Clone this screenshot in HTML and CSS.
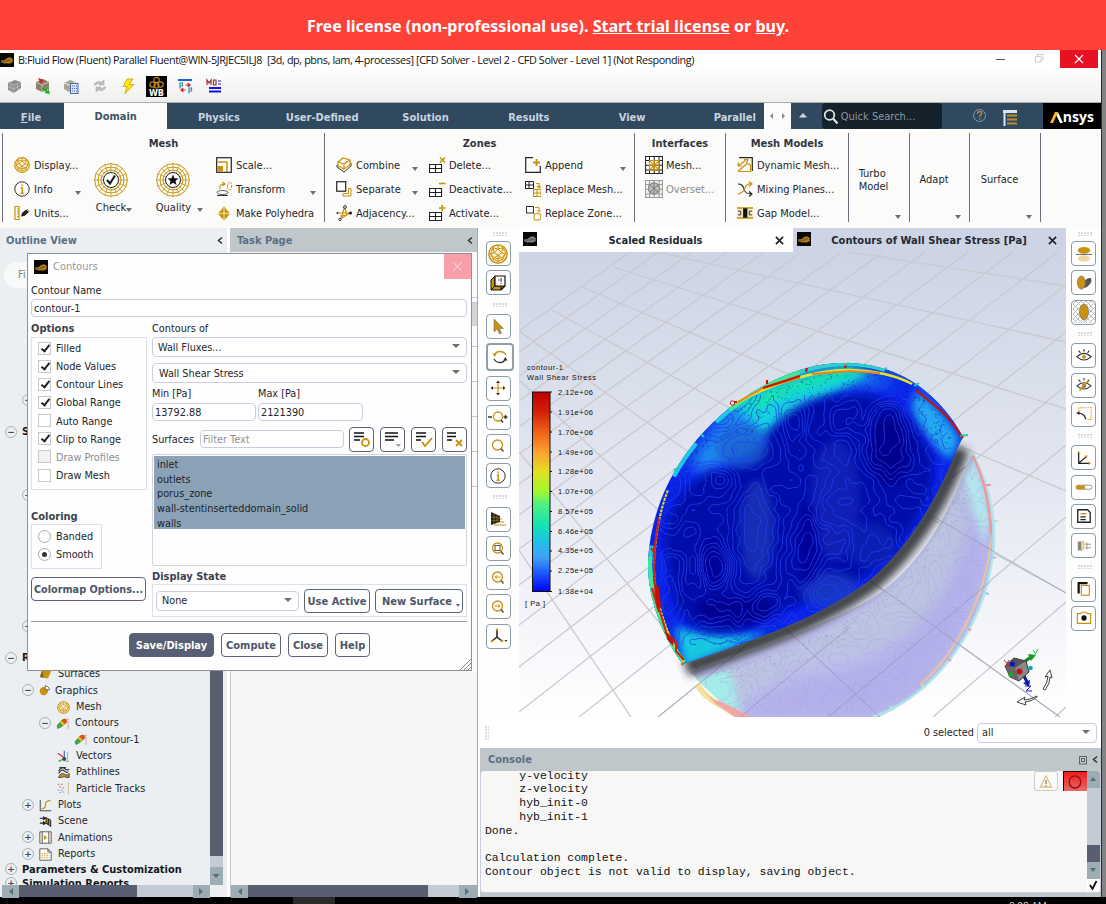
FILE: index.html
```html
<!DOCTYPE html>
<html lang="en">
<head>
<meta charset="utf-8">
<title>Fluent</title>
<link rel="stylesheet" href="styles.css">
</head>
<body>
<svg class="defs" width="0" height="0">
  <symbol id="logo" viewBox="0 0 14 14"><rect width="14" height="14" fill="#0a0805"/><path d="M1 8Q4 9 6 6Q9 3 12 5L13 9Q10 12 6 10Q3 11 1 9Z" fill="#8a5f10"/><path d="M1 8Q5 8 7 6T13 7M4 10Q8 10 12 8" stroke="#d9a030" fill="none" stroke-width=".7"/></symbol>
  <symbol id="sphere" viewBox="0 0 16 16"><circle cx="8" cy="8" r="7.3" fill="#faf0d4" stroke="#c9920e" stroke-width="1.2"/><path d="M4 3L8 4L12 3L14 7L12 12L8 14L4 12L2 8L4 3M8 1V4L5 7L8 9L11 7L8 4M5 7L2 8L5 11L8 9L8 14M5 11L4 13M11 7L14 8L11 11L8 9M11 11L12 13M5 11L8 12L11 11M4 3L5 7M12 3L11 7" fill="none" stroke="#c9920e" stroke-width=".8"/></symbol>
  <symbol id="info" viewBox="0 0 16 16"><circle cx="8" cy="8" r="7.2" fill="#fff" stroke="#333" stroke-width="1"/><path d="M8 3.5V5.3M6.8 7H8.3V12M6.5 12.2H9.8" stroke="#c9920e" stroke-width="1.5" fill="none"/></symbol>
  <symbol id="units" viewBox="0 0 16 16"><path d="M1 1.500H5V14.500H1ZM3 4H5M3 6.500H5M3 9H5M3 11.500H5" fill="none" stroke="#c9920e" stroke-width="1.2"/><path d="M7 11.500L8 8L12 4.500L15 7L10.500 11Z" fill="#222"/><path d="M13 4l2.500 2.500" stroke="#888"/></symbol>
  <symbol id="web" viewBox="0 0 34 34"><g fill="none" stroke="#c9920e" stroke-width="1"><circle cx="17" cy="17" r="16.300"/><circle cx="17" cy="17" r="13"/><circle cx="17" cy="17" r="10"/><path d="M17 0V34M0 17H34M5 5L29 29M29 5L5 29M10.500 1.500L23.500 32.500M23.500 1.500L10.500 32.500M1.500 10.500L32.500 23.500M1.500 23.500L32.500 10.500" stroke-width=".7"/></g><circle cx="17" cy="17" r="7.500" fill="#fff" stroke="#222"/></symbol>
  <symbol id="scale" viewBox="0 0 16 16"><rect x=".7" y=".7" width="14.600" height="14.600" fill="#fff" stroke="#222" stroke-width="1.2"/><path d="M1.500 5H11V15" fill="none" stroke="#c9920e" stroke-width="1.500"/><rect x="1.500" y="9" width="5.500" height="5.500" fill="#c9920e"/></symbol>
  <symbol id="transform" viewBox="0 0 16 16"><path d="M4 8Q3 3 8 3M6.500 1L9 3L6.500 5" fill="none" stroke="#c9920e" stroke-width="1.2"/><ellipse cx="13.500" cy="5" rx="2" ry="4" fill="none" stroke="#c9920e" stroke-dasharray="2 1"/><ellipse cx="6.500" cy="11.500" rx="5.500" ry="2" fill="#fff" stroke="#555"/><path d="M1 14.500H12" stroke="#333"/></symbol>
  <symbol id="poly" viewBox="0 0 16 16"><path d="M8 1L14 9L8 15.500L2 9Z" fill="#c9920e"/><path d="M8 1V15M2 9Q8 7 14 9" fill="none" stroke="#fff1c0" stroke-width=".9"/></symbol>
  <symbol id="combine" viewBox="0 0 16 16"><path d="M1 10L8 15L15 9V6L8 11L1 8Z" fill="#fff" stroke="#333"/><path d="M2 5L7 1L14 3V8L8 12L2 9ZM2 5L8 7L14 3M8 7V12" fill="#fffaf0" stroke="#c9920e" stroke-width="1.2"/></symbol>
  <symbol id="separate" viewBox="0 0 16 16"><rect x=".7" y=".7" width="9" height="9.500" fill="#fff" stroke="#222" stroke-width="1.2"/><path d="M12.500 7.500H15V15H7V12.500H12.500Z" fill="none" stroke="#c9920e"/></symbol>
  <symbol id="adj" viewBox="0 0 16 16"><path d="M8.500 2L5 14M15 8H2M8.500 2L11 10M4 14L14 8M4 11L11 10" fill="none" stroke="#c9920e" stroke-width="1.200"/><circle cx="9" cy="2" r="1.400" fill="#fff" stroke="#333"/><circle cx="14.500" cy="8" r="1.500" fill="#111"/><circle cx="1.500" cy="8" r="1.100" fill="#333"/><circle cx="4" cy="14.500" r="1.200" fill="#fff" stroke="#333"/></symbol>
  <symbol id="cells" viewBox="0 0 16 16"><path d="M.5 7.500H12.500V15.500H.5ZM.5 11.500H12.500M6.500 7.500V15.500" fill="#fff" stroke="#222" stroke-width="1.1"/></symbol>
  <symbol id="append" viewBox="0 0 16 16"><path d="M8 .7H.7V15.300H15.300V9" fill="none" stroke="#222" stroke-width="1.2"/><path d="M11.500 2V9M8 5.500H15" stroke="#c9920e" stroke-width="1.800"/></symbol>
  <symbol id="repmesh" viewBox="0 0 16 16"><path d="M0 .5H8.500V7.500H0M0 4H8.500M4 .5V7.500M.5 .5V7.500" fill="none" stroke="#222"/><path d="M8.500 8.500H16V15.500H8.500ZM8.500 12H16M12 8.500V15.500M11 2.500H14V6M12 5L14 7L16 5" fill="none" stroke="#c9920e" stroke-width="1.100"/></symbol>
  <symbol id="repzone" viewBox="0 0 16 16"><rect x="1.500" y="1.500" width="7" height="6.500" fill="#fff" stroke="#333"/><rect x="9" y="8.500" width="6.500" height="6.500" rx="2" fill="#fff" stroke="#d6ab48" stroke-width="1.400"/><path d="M10 2.500H14V6M12.500 5L14 7L15.500 5" fill="none" stroke="#c9920e"/></symbol>
  <symbol id="imesh" viewBox="0 0 16 16"><path d="M.5 .5H15.500V15.500H.5ZM4 .5V15.500M12.500 .5V15.500M8.200 .5V15.500M.5 4H15.500M.5 8.200H15.500M.5 12.500H15.500" fill="#fff" stroke="#222" stroke-width=".9"/><path d="M4 4h8.500v8.500h-8.500zM4.500 4.500l7.500 7.500M12 4.500l-7.500 7.500M8.200 4v8.500M4 8.200h8.500" fill="none" stroke="#c9920e" stroke-width="1"/></symbol>
  <symbol id="overset" viewBox="0 0 16 16"><path d="M.5 .5H15.500V15.500H.5ZM4 .5V15.500M12.500 .5V15.500M8.200 .5V15.500M.5 4H15.500M.5 8.200H15.500M.5 12.500H15.500" fill="#f4f4f4" stroke="#999" stroke-width=".9"/><circle cx="8" cy="7.500" r="5" fill="#bbb" stroke="#888"/><path d="M4 4l8 7M12 4l-8 7M8 2v11" stroke="#777" stroke-width=".8"/></symbol>
  <symbol id="dyn" viewBox="0 0 16 16"><path d="M2 .7H15.300V14" fill="none" stroke="#222" stroke-width="1.200"/><path d="M1 9L9 3M7 2.500L11 2.500L9.500 6M1 9L1.500 5.500M1 9H5M1 14.500L10 6.500L13.500 8V14.500H1" fill="none" stroke="#c9920e" stroke-width="1.200"/></symbol>
  <symbol id="mix" viewBox="0 0 16 16"><path d="M1 3Q6 3 7 8T14 13M12 10.500L15 13L12 15.500" fill="none" stroke="#222" stroke-width="1.100"/><path d="M1 13Q6 12 8 7T14 3M12 .5L15 3L12 5.500" fill="none" stroke="#c9920e" stroke-width="1.200"/></symbol>
  <symbol id="gap" viewBox="0 0 17 12"><rect width="17" height="12" fill="#f2e6c4"/><path d="M0 .7H17M0 11.300H17" stroke="#c9920e" stroke-width="1.400"/><rect x="6.500" y="1" width="4.500" height="10" fill="#111"/><path d="M1 4H4V8H1M16 4H13V8H16" fill="none" stroke="#333"/></symbol>
  <symbol id="lens" viewBox="0 0 16 16"><circle cx="7.500" cy="7" r="5" fill="#fff" stroke="#c9920e" stroke-width="1.300"/><path d="M11 10.500L13.500 13.500" stroke="#555" stroke-width="1.500"/></symbol>
  <symbol id="contour" viewBox="0 0 16 16"><path d="M1.500 14Q0 11 2 9L8 3Q11 1 13 3Q14 6 12 8L6 13Q3 15 1.500 14Z" fill="#4aa04a"/><path d="M6 5L8 3Q11 1 13 3Q14 6 12 8L10.500 9Z" fill="#e0501c"/><path d="M4.500 6.500L6.500 4.500L11 8.500L9 10.500Z" fill="#d8c820"/><path d="M14.800 2V15" stroke="#c65" stroke-dasharray="2 1"/></symbol>
</svg>

<div class="banner"><span>Free license (non-professional use). <a>Start trial license</a> or <a>buy</a>.</span></div>

<div class="desktop">
<div class="app">
  <header class="titlebar">
    <svg class="title-logo"><use href="#logo"/></svg>
    <span class="title-text">B:Fluid Flow (Fluent) Parallel Fluent@WIN-5JRJEC5ILJ8 &nbsp;[3d, dp, pbns, lam, 4-processes] [CFD Solver - Level 2 - CFD Solver - Level 1] (Not Responding)</span>
    <svg class="win-icons" width="60" height="20" viewBox="0 0 60 20"><path d="M2 9.500h9" stroke="#555"/><path d="M41.500 6.500h5.500v5.500h-5.500zM43.500 6.500v-2h5.500v5.500h-2" fill="none" stroke="#ccc"/></svg>
    <svg class="win-close" viewBox="0 0 38 18"><path d="M15 5l8 8M23 5l-8 8" stroke="#fff" stroke-width="1.100"/></svg>
  </header>

  <div class="quickbar">
    <svg viewBox="0 0 20 20"><path d="M4 7L11 4L17 6V12L10 17L4 14Z" fill="#8c8c8c"/><path d="M4 7L10 9L17 6M10 9V17M7 8V15.500M13.500 7.500V14.500M4 10.500L10 13L17 9" stroke="#bdbdbd" stroke-width=".8" fill="none"/></svg>
    <svg viewBox="0 0 20 20"><path d="M3 6L10 3L16 6V13L9 16L3 13Z" fill="#8a8168"/><path d="M3 6L9 9L16 6M9 9V16" stroke="#c9c2a8" fill="none"/><path d="M5 2l6 2-3 4z" fill="#c22"/><path d="M10 11l5 4V12l2 6-6-1 2-1-4-3z" fill="#2a2"/></svg>
    <svg viewBox="0 0 20 20"><path d="M3 7L9 4L15 6V13L8 16L3 13Z" fill="#aaa791"/><path d="M3 7L8 9L15 6" stroke="#eee" fill="none"/><rect x="9.500" y="7.500" width="7.500" height="10" fill="#dbe5f8" stroke="#4a69ae"/><path d="M11 10h5M11 12.500h5M11 15h5" stroke="#4a69ae" stroke-dasharray="1 1"/></svg>
    <svg viewBox="0 0 20 20"><path d="M4 9Q6 4 12 6L14 4V9H9L11 7.500Q7 7 6 9ZM16 11Q14 16 8 14L6 16V11H11L9 12.500Q13 13 14 11Z" fill="#c4c4c4" stroke="#999" stroke-width=".5"/></svg>
    <svg viewBox="0 0 20 20"><path d="M9 3L5 10.500H9L7 17.500L16 8.500H11L15 3Z" fill="#ffe800" stroke="#b89800" stroke-width=".7"/></svg>
    <span class="wb"><svg viewBox="0 0 21 13"><g fill="none" stroke="#c28a1c" stroke-width="1.200"><circle cx="10.500" cy="4" r="2.700"/><circle cx="6.500" cy="8.500" r="2.700"/><circle cx="14.500" cy="8.500" r="2.700"/><circle cx="10.500" cy="9.500" r="2.500"/></g></svg><b>WB</b></span>
    <svg viewBox="0 0 20 20"><path d="M3 4h14" stroke="#1768c4" stroke-width="2"/><path d="M5 12.500V7h2.500v3h-2.500M14 17.500v-5.500h2.500v3h-2.500" fill="none" stroke="#2a8fc0" stroke-width="1.200"/><path d="M10 9h5M13 7l2.500 2-2.500 2zM11 14H6M8 12l-2.500 2 2.500 2z" fill="#d22" stroke="#d22" stroke-width=".8"/></svg>
    <svg viewBox="0 0 20 20"><path d="M3 9V4l2 3 2-3v5M9.500 4h2.500v5H9.500z" fill="none" stroke="#9b3030" stroke-width="1.200"/><path d="M14 5h3M14 8h3" stroke="#22c"/><path d="M5 12h12M5 15.500h12" stroke="#11e" stroke-width="2"/></svg>
  </div>

  <nav class="tabs">
    <span class="tab tab-file"><u>F</u>ile</span><span class="tab tab-active">Domain</span><span class="tab">Physics</span><span class="tab">User-Defined</span><span class="tab">Solution</span><span class="tab">Results</span><span class="tab">View</span><span class="tab tab-last">Parallel</span>
    <span class="tab-scroll"><svg width="27" height="26"><path d="M9 10v6l-3-3zM18 10v6l3-3z" fill="#888"/></svg></span>
    <span class="tab-up"><svg width="31" height="26"><path d="M8 14.500h8l-4-4.500z" fill="#cdd8e2"/></svg></span>
    <span class="search"><svg width="18" height="18" viewBox="0 0 18 18"><circle cx="7.500" cy="7" r="4.800" fill="none" stroke="#dce3e8" stroke-width="1.800"/><path d="M11 10.500l4.500 5" stroke="#dce3e8" stroke-width="2.200"/></svg>Quick Search...</span>
    <svg class="tab-tools" width="101" height="26"><circle cx="37.500" cy="12.500" r="6" fill="none" stroke="#8296a8"/><path d="M35.500 11q0-2.500 2.200-2.500t2 2.200q-.2 1-2 2.300v1M37.700 15v1.500" fill="none" stroke="#b98c30" stroke-width="1.300"/><path d="M61 8.500h14" stroke="#dde4ec" stroke-width="3"/><path d="M62.500 10v13" stroke="#dde4ec" stroke-width="2"/><path d="M65 12.500h10M65 16.500h10M65 20.500h10" stroke="#b98c30" stroke-width="2.200"/></svg>
    <span class="ansys"><svg width="14" height="13" viewBox="0 0 14 13"><path d="M0 12L5 1H8L3 12Z" fill="#ffb71b"/><path d="M6.500 4.500L8 1L13 12H10Z" fill="#fff"/></svg><b>nsys</b></span>
  </nav>

  <section class="ribbon">
    <div class="group g-mesh">
      <h3>Mesh</h3>
      <div class="cols">
        <div class="col"><p><svg><use href="#sphere"/></svg>Display...</p><p><svg><use href="#info"/></svg>Info<i class="caret"></i></p><p><svg><use href="#units"/></svg>Units...</p></div>
        <div class="big"><svg viewBox="0 0 34 34"><use href="#web"/><path d="M13 17l3 3.500 5-8" fill="none" stroke="#111" stroke-width="2"/></svg><span>Check<i class="caret"></i></span></div>
        <div class="big big-q"><svg viewBox="0 0 34 34"><use href="#web"/><path d="M17 11.500l1.500 3.800 4 .2-3 2.600 1 4-3.500-2.300-3.500 2.300 1-4-3-2.600 4-.2z" fill="#111"/></svg><span>Quality<i class="caret caret-far"></i></span></div>
        <div class="col"><p><svg><use href="#scale"/></svg>Scale...</p><p><svg><use href="#transform"/></svg>Transform<i class="caret"></i></p><p><svg><use href="#poly"/></svg>Make Polyhedra</p></div>
      </div>
    </div>
    <div class="group g-zones">
      <h3>Zones</h3>
      <div class="cols">
        <div class="col col-combine"><p><svg><use href="#combine"/></svg>Combine<i class="caret"></i></p><p><svg><use href="#separate"/></svg>Separate<i class="caret"></i></p><p><svg><use href="#adj"/></svg>Adjacency...</p></div>
        <div class="col"><p><svg viewBox="0 0 16 16"><use href="#cells"/><path d="M11 .5l5 5M16 .5l-5 5" stroke="#c9920e" stroke-width="1.600"/></svg>Delete...</p><p><svg viewBox="0 0 16 16"><use href="#cells"/><path d="M10 2.500h6.500" stroke="#c9920e" stroke-width="1.600"/></svg>Deactivate...</p><p><svg viewBox="0 0 16 16"><use href="#cells"/><path d="M10 3h6.500M13.200 0v6.500" stroke="#c9920e" stroke-width="1.600"/></svg>Activate...</p></div>
        <div class="col"><p><svg><use href="#append"/></svg>Append<i class="caret"></i></p><p><svg><use href="#repmesh"/></svg>Replace Mesh...</p><p><svg><use href="#repzone"/></svg>Replace Zone...</p></div>
      </div>
    </div>
    <div class="group g-int">
      <h3>Interfaces</h3>
      <div class="cols"><div class="col"><p><svg class="i18"><use href="#imesh"/></svg>Mesh...</p><p class="dim"><svg class="i18"><use href="#overset"/></svg>Overset...</p></div></div>
    </div>
    <div class="group g-models">
      <h3>Mesh Models</h3>
      <div class="cols"><div class="col"><p><svg><use href="#dyn"/></svg>Dynamic Mesh...</p><p><svg><use href="#mix"/></svg>Mixing Planes...</p><p><svg><use href="#gap"/></svg>Gap Model...</p></div></div>
    </div>
    <div class="group solo g-turbo"><span>Turbo<br>Model</span><i class="caret"></i></div>
    <div class="group solo g-adapt"><span>Adapt</span><i class="caret"></i></div>
    <div class="group solo g-surface"><span>Surface</span><i class="caret"></i></div>
  </section>

  <main class="workspace">
    <aside class="outline">
      <div class="panel-head">Outline View<svg width="8" height="10"><path d="M6 1.500L2.500 4.500L6 7.500" fill="none" stroke="#333" stroke-width="1.500"/></svg></div>
      <div class="outline-body">
        <div class="tree">
          <div class="tree-filter">Fi</div>
          <div class="row hid-1"><i class="knob">−</i></div>
          <div class="row hid-2 top"><i class="knob">−</i><b>S</b></div>
          <div class="row hid-3"><i class="knob">+</i></div>
          <div class="row hid-4"><i class="knob">−</i></div>
          <div class="row hid-5 top"><i class="knob">−</i><b>R</b></div>
          <div class="row lv1"><svg class="leaf" viewBox="0 0 16 16"><path d="M4 2L15 4L11 13L1 11Z" fill="#c9920e"/><path d="M4 2L1 11L6 12Z" fill="#8a6610"/></svg>Surfaces</div>
          <div class="row lv1"><i class="knob">−</i><svg class="narrow" viewBox="0 0 16 16"><circle cx="7" cy="9" r="6" fill="#c9920e"/><path d="M9 7V1Q15 2 15 7Z" fill="#fff" stroke="#333"/></svg>Graphics</div>
          <div class="row lv2"><svg class="leaf"><use href="#sphere"/></svg>Mesh</div>
          <div class="row lv2"><i class="knob">−</i><svg><use href="#contour"/></svg>Contours</div>
          <div class="row lv3"><svg class="leaf"><use href="#contour"/></svg>contour-1</div>
          <div class="row lv2"><svg class="leaf" viewBox="0 0 16 16"><path d="M1 4l7 5" stroke="#d33" stroke-width="1.500"/><path d="M9 1v8" stroke="#37c" stroke-width="1.500"/><path d="M2 14l6-3" stroke="#3a3" stroke-width="1.500"/><circle cx="9" cy="11" r="2.500" fill="#445"/><path d="M13 3v10M11 14h4" stroke="#777" stroke-dasharray="2 1"/></svg>Vectors</div>
          <div class="row lv2"><svg class="leaf" viewBox="0 0 16 16"><path d="M2 14Q5 7 9 10T15 9V14H11Q9 12 6 14Z" fill="#c9920e" stroke="#333"/><path d="M2 6Q6 0 9 3T15 4M2 9Q6 3 9 6T14 7M3 2h8" fill="none" stroke="#333" stroke-width="1.500"/></svg>Pathlines</div>
          <div class="row lv2"><svg class="leaf" viewBox="0 0 16 16"><path d="M1 3h8M3 6l8 2" stroke="#d77" stroke-dasharray="2 2" stroke-width="1.400"/><path d="M1 10h7M3 13l8-1" stroke="#99d" stroke-dasharray="2 2" stroke-width="1.400"/><path d="M14 1v14" stroke="#c86" stroke-dasharray="2 1"/></svg>Particle Tracks</div>
          <div class="row lv1"><i class="knob">+</i><svg viewBox="0 0 16 16"><path d="M1.500 1V14.500H15" fill="none" stroke="#444" stroke-width="1.200"/><path d="M3 12Q8 12 8 7T14 2" fill="none" stroke="#c9920e" stroke-width="1.400"/></svg>Plots</div>
          <div class="row lv1"><svg class="leaf" viewBox="0 0 16 16"><path d="M1 4h6M1 10h6M5 2l3 2-3 2M5 8l3 2-3 2" stroke="#222" fill="#222" stroke-width="1.300"/><path d="M8 2L15 6V15L8 10Z" fill="#222"/><path d="M10 4v6M13 6v7" stroke="#c9920e" stroke-width="1.600"/></svg>Scene</div>
          <div class="row lv1"><i class="knob">+</i><svg viewBox="0 0 16 16"><path d="M1 1H15V15H1ZM4 1V15M12 1V15" fill="#fff" stroke="#444"/><path d="M6 5l4 3-4 3z" fill="#c9920e"/><path d="M2.500 2v12M13.500 2v12" stroke="#c9920e" stroke-dasharray="1.500 1.500"/></svg>Animations</div>
          <div class="row lv1"><i class="knob">+</i><svg viewBox="0 0 16 16"><path d="M1 1H11L15 5V15H1ZM11 1V5H15" fill="#fff" stroke="#444"/><path d="M3 7h10M3 9.500h10M3 12h10" stroke="#c9920e" stroke-dasharray="2 1"/></svg>Reports</div>
          <div class="row top bold"><i class="knob">+</i><b>Parameters &amp; Customization</b></div>
          <div class="row top last"><i class="knob">+</i><b>Simulation Reports</b></div>
        </div>
        <div class="vscroll"><span class="thumb"></span><span class="track"></span><svg class="sbtn" width="13" height="18"><path d="M2.500 7h7l-3.500 4z" fill="#5c6c75"/></svg></div>
      </div>
      <div class="hscroll hs-outline"><svg class="sbtn" width="17" height="13"><path d="M11 3v7l-4-3.500z" fill="#5c6c75"/></svg><span class="thumb"></span><span class="track"></span><svg class="sbtn" width="17" height="13"><path d="M6 3v7l4-3.500z" fill="#5c6c75"/></svg></div>
    </aside>

    <aside class="task">
      <div class="panel-head">Task Page<svg width="8" height="10"><path d="M6 1.500L2.500 4.500L6 7.500" fill="none" stroke="#333" stroke-width="1.500"/></svg></div>
      <div class="task-body"><div class="peek"><i></i><i class="mo"></i><i></i><i></i><i></i><i></i><i></i></div></div>
      <div class="hscroll hs-task"><svg class="sbtn" width="17" height="13"><path d="M11 3v7l-4-3.500z" fill="#5c6c75"/></svg><span class="thumb"></span><span class="track"></span><svg class="sbtn" width="18" height="13"><path d="M6 3v7l4-3.500z" fill="#5c6c75"/></svg></div>
    </aside>

    <section class="right">
      <div class="view-row">
        <div class="tools tools-left">
          <i class="grip"></i>
          <span class="tool"><svg class="t20"><use href="#sphere"/></svg></span>
          <span class="tool"><svg viewBox="0 0 16 16"><path d="M1 5L5 1V11L1 15Z" fill="#c9920e" stroke="#111"/><path d="M1 15H11L15 11H5Z" fill="#c9920e" stroke="#111"/><path d="M5 1H15V11H5ZM11 15V12M11 15L15 11" fill="#fff" stroke="#111" stroke-width="1.200"/><path d="M8 5h5M11 3v6" stroke="#333" stroke-dasharray="1.500 1"/></svg></span>
          <i class="grip"></i>
          <span class="tool"><svg viewBox="0 0 16 16"><path d="M4 0V13L7 10L9.500 15L11.500 14L9.500 9.500H13.500Z" fill="#c9920e" stroke="#777" stroke-width=".6"/></svg></span>
          <span class="tool tool-on"><svg viewBox="0 0 16 16"><path d="M2.500 6Q4 2.500 8 2.500T14 6" fill="none" stroke="#c9920e" stroke-width="1.300"/><path d="M.5 4.500l4.500 0L2.500 8z" fill="#c9920e"/><path d="M2 10Q4 13.500 8 13.500T13.500 10" fill="none" stroke="#333" stroke-width="1.300"/><path d="M15.500 11.500l-4.500 0L13.500 8z" fill="#333"/></svg></span>
          <span class="tool"><svg viewBox="0 0 16 16"><path d="M8 2V14M2 8H14" stroke="#c9920e" stroke-width="1.200"/><path d="M8 .5l2 2.500H6zM8 15.500l2-2.500H6zM.5 8L3 6v4zM15.500 8L13 6v4z" fill="#333"/></svg></span>
          <span class="tool"><svg class="t20" viewBox="0 0 20 16"><circle cx="10" cy="7.500" r="4.500" fill="#fff" stroke="#c9920e" stroke-width="1.300"/><path d="M13 11l2 2.500M0 8h4M15.500 8h4M17.500 6v4" stroke="#333" stroke-width="1.400"/></svg></span>
          <span class="tool"><svg><use href="#lens"/></svg></span>
          <span class="tool"><svg><use href="#info"/></svg></span>
          <i class="grip"></i>
          <span class="tool"><svg viewBox="0 0 16 16"><path d="M1 1L10 5V11L1 14Z" fill="#222"/><path d="M4 2v11M7 3v9M1 6l9 1M1 10l9-1" stroke="#c9920e" stroke-width=".5"/><path d="M10 8H12M10 11H14M4 14H16" stroke="#c9920e" stroke-width="1.200"/></svg></span>
          <span class="tool"><svg viewBox="0 0 16 16"><use href="#lens"/><rect x="5" y="4.500" width="5" height="5" fill="#fff" stroke="#555"/></svg></span>
          <span class="tool"><svg viewBox="0 0 16 16"><use href="#lens"/><path d="M5 7h5.500M7 5.500L5 7l2 1.500" fill="none" stroke="#c9920e"/></svg></span>
          <span class="tool"><svg viewBox="0 0 16 16"><use href="#lens"/><path d="M4.500 7H10M8 5.500L10 7L8 8.500" fill="none" stroke="#c9920e"/></svg></span>
          <span class="tool"><svg viewBox="0 0 16 16"><path d="M7 2V9L2 13M7 9L12 13" fill="none" stroke="#222" stroke-width="1.500"/><circle cx="7" cy="1.800" r="1.300" fill="#c9920e"/><circle cx="2" cy="13" r="1.300" fill="#c9920e"/><circle cx="12" cy="13" r="1.300" fill="#c9920e"/><path d="M14.500 12h3l-1.500 2z" fill="#333"/></svg></span>
        </div>
        <div class="viewer">
          <div class="view-tabs">
            <div class="vtab"><svg class="vt-logo"><use href="#logo" style="filter:grayscale(1)"/></svg><b>Scaled Residuals</b><svg class="vt-x" viewBox="0 0 10 10"><path d="M1 1l8 8M9 1l-8 8" stroke="#222" stroke-width="1.800"/></svg></div>
            <div class="vtab vtab-on"><svg class="vt-logo"><use href="#logo"/></svg><b>Contours of Wall Shear Stress [Pa]</b><svg class="vt-x" viewBox="0 0 10 10"><path d="M1 1l8 8M9 1l-8 8" stroke="#222" stroke-width="1.800"/></svg></div>
          </div>
          <svg class="scene" viewBox="519 252 547 465" width="547" height="465">
            <defs>
              <linearGradient id="sky" x1="0" y1="0" x2="0" y2="1"><stop offset="0" stop-color="#cdd4e4"/><stop offset=".5" stop-color="#e4e7f2"/><stop offset="1" stop-color="#fff"/></linearGradient>
              <linearGradient id="jet" x1="0" y1="0" x2="0" y2="1"><stop offset="0" stop-color="#c00000"/><stop offset=".1" stop-color="#d42008"/><stop offset=".2" stop-color="#f06018"/><stop offset=".3" stop-color="#ffa030"/><stop offset=".4" stop-color="#e0e020"/><stop offset=".5" stop-color="#a0f830"/><stop offset=".56" stop-color="#50f080"/><stop offset=".68" stop-color="#10e0b8"/><stop offset=".75" stop-color="#20c0e8"/><stop offset=".83" stop-color="#40a0f8"/><stop offset=".9" stop-color="#2060f8"/><stop offset="1" stop-color="#0000ff"/></linearGradient>
              <clipPath id="dome"><path id="dome-path" d="M683 664C668 645 648 605 648 565C650 480 710 400 800 370C836 358 884 360 919 386C938 400 953 418 963 437L957 449C935 505 905 550 870 580C820 618 755 640 683 664Z"/></clipPath>
              <clipPath id="lowclip"><path d="M695 678Q790 655 860 613T972 453C985 475 994 505 994 540C990 615 945 690 873 720H740Z"/></clipPath>
              <filter id="b2" x="-20%" y="-20%" width="140%" height="140%"><feGaussianBlur stdDeviation="1.500"/></filter>
              <filter id="b5" x="-30%" y="-30%" width="160%" height="160%"><feGaussianBlur stdDeviation="4"/></filter>
              <filter id="b9" x="-30%" y="-30%" width="160%" height="160%"><feGaussianBlur stdDeviation="8"/></filter>
            </defs>
            <rect x="519" y="252" width="547" height="465" fill="url(#sky)"/>
            <g id="floor" stroke="#c9c9ce" stroke-width="1.300" fill="none">
              <path d="M850 252L1066 286M657 252L1066 342M613 267L1066 409M582 287L1066 491M552 310L1066 593M519 331L1060 717M519 380L880 717M519 452L737 717M519 550L631 717"/>
              <path d="M933 717L1066 602M828 717L1066 517M740 717L1066 445M658 717L1066 386M579 717L1066 332M519 712L1066 285M519 667L1058 252M519 625L1013 252M519 585L968 252M519 549L925 252M519 515L883 252M519 484L842 252M519 454L802 252M519 427L764 252M519 401L727 252M519 376L692 252M519 352L658 252M519 331L630 252M1055 717L1066 707"/>
            </g>
            <path d="M690 672Q790 640 860 605T972 453C985 475 994 505 994 540C990 615 945 690 873 717H737Z" fill="#b6b8e8" opacity=".88"/>
            <g clip-path="url(#lowclip)">
              <path d="M690 676Q760 660 800 650L900 560L960 470L985 510L930 640L800 660L720 720Z" fill="#bcc4e2" filter="url(#b9)"/>
              <path d="M735 720Q760 680 830 672Q930 650 965 540Q975 510 960 490Q990 500 988 560Q950 700 870 720Z" fill="#b0acea" opacity=".8" filter="url(#b9)"/>
              <path d="M690 680L730 666L740 716H712Z" fill="#a4ecea" filter="url(#b5)"/>
              <path d="M972 455L990 515L984 545L965 480Z" fill="#b2eaee" filter="url(#b5)"/>
              <path id="ghost-lines" fill="none" stroke="#a3a3e0" stroke-width=".5" opacity=".7"/>
              <path id="ghost-specks" fill="none" stroke="#8a8aae" stroke-width=".6" opacity=".5"/>
            </g>
            <path d="M972 453C985 475 994 505 994 540C990 615 945 690 873 717" fill="none" stroke="#a9e6ea" stroke-width="3" opacity=".8"/>
            <path d="M973 456C984 478 990 505 991 535" fill="none" stroke="#ef9a9a" stroke-width="2.500"/>
            <path d="M991 540C987 590 960 650 920 685" fill="none" stroke="#ecc3a0" stroke-width="2"/>
            <path d="M697 684Q704 697 722 706L740 717" fill="none" stroke="#f1e39f" stroke-width="6"/>
            <path d="M704 692L714 700L722 702L752 717H735L716 704Z" fill="#f3a7a5"/>
            <path d="M984 485l7 0M968 629l3 1M947 658l4 3" stroke="#ee9b9b" stroke-width="2"/>
            <path d="M993 521l5 0M921 684l4 4M890 706l4 4" stroke="#b5e8c8" stroke-width="2"/>
            <path d="M990 557l6 1M985 593l4 1" stroke="#a5c8f0" stroke-width="2"/>
            <path d="M785 628L880 717M870 580L1060 717M927 513L1066 593M658 717L753 640M828 717L990 582M740 717L850 627M940 486L965 467" stroke="#9292b4" stroke-width="1" opacity=".65"/>
            <path d="M686 668C757 643 821 621 872 583C909 551 939 508 961 448" fill="none" stroke="#2c2e30" stroke-width="17" opacity=".9" filter="url(#b5)"/>
            <use href="#dome-path" fill="#0a24ea"/>
            <g clip-path="url(#dome)">
              <path d="M730 402Q790 360 850 362L900 385Q820 380 790 418Q760 460 735 455Q700 490 690 460Z" fill="#1d8cf0" filter="url(#b9)"/>
              <path d="M735 405Q790 370 870 372Q830 394 800 408Q785 430 760 432Z" fill="#12cfe0" filter="url(#b5)"/>
              <path d="M735 408Q790 375 850 368L865 375Q800 384 760 408Z" fill="#18e4b0" filter="url(#b5)"/>
              <path d="M915 390Q945 410 960 440L950 460Q925 440 912 410Z" fill="#20a8f0" filter="url(#b5)"/>
              <path d="M675 626Q700 638 770 633L684 668Z" fill="#18c8e0" filter="url(#b5)"/>
              <path d="M664 540Q668 495 712 470Q750 470 770 430Q800 395 850 395Q900 392 915 430Q945 460 925 505Q895 560 850 585Q780 610 740 630Q690 640 674 600Z" fill="#0408a8" filter="url(#b5)"/>
              <g filter="url(#b5)" opacity=".75"><ellipse cx="757" cy="530" rx="17" ry="50" fill="#1c3ab8"/><ellipse cx="835" cy="500" rx="25" ry="60" fill="#1428b8"/><ellipse cx="830" cy="590" rx="30" ry="18" fill="#1d40c4"/><ellipse cx="742" cy="446" rx="26" ry="22" fill="#1a60d0"/><ellipse cx="870" cy="545" rx="25" ry="22" fill="#1028b4"/></g>
              <g filter="url(#b5)"><ellipse cx="890" cy="450" rx="22" ry="36" fill="#00008c"/><ellipse cx="712" cy="562" rx="10" ry="26" fill="#000096"/><ellipse cx="735" cy="610" rx="38" ry="15" fill="#00008f"/><ellipse cx="808" cy="545" rx="10" ry="40" fill="#000098"/></g>
              <path id="lines" fill="none" stroke="#2440f0" stroke-width=".8"/>
              <path id="specks" fill="none" stroke="#0a1e68" stroke-width=".8" opacity=".7"/>
            </g>
            <g fill="none">
              <g clip-path="url(#dome)">
                <path pathLength="100" d="M684 662C670 645 650 605 650 565C652 480 711 402 800 372" stroke="#1cc8e0" stroke-width="4.500" stroke-dasharray="34 20 11 8 27 0"/>
                <path pathLength="100" d="M684 662C670 645 650 605 650 565C652 480 711 402 800 372" stroke="#40e890" stroke-width="4" stroke-dasharray="31 47 22 0"/>
                <path d="M800 372C830 362 860 362 885 370" stroke="#30d0c8" stroke-width="4"/>
                <path d="M885 369Q905 375 919 386Q945 405 963 437" stroke="#1848f0" stroke-width="5"/>
              </g>
              <path d="M735 403Q800 370 850 370Q888 371 912 384" stroke="#e8e428" stroke-width="2.500"/>
              <path d="M738 402L765 387L800 376M760 389L800 378M812 374L850 371L880 373" stroke="#f08018" stroke-width="1.800"/>
              <path d="M763 388L800 376M734 402l3 0M767 384l0-4M806 372l1-4M845 368l1-4M916 390L940 410Q953 422 961 436" stroke="#c81404" stroke-width="2.200"/>
              <path d="M684 662C672 646 654 605 654 565Q656 520 668 490" stroke="#e8d820" stroke-width="2" stroke-dasharray="3 1"/>
              <path d="M659 518L655 545L654 570L656 598L666 632M652 588L659 612M651 548l5 7M665 632L676 642L676 651L684 660" stroke="#d42008" stroke-width="2"/>
              <path d="M655 585l2 24 4-2-2-20zM666 632l8 8-1 6-6-7z" fill="#c81000"/>
              <path d="M845 365l4-2M885 369l2-1M914 386l5-3M960 436l8-1M701 434l3 3M674 469l4 2" stroke="#20c8b0" stroke-width="2"/>
              <circle cx="732.500" cy="403" r="2.200" stroke="#c02010"/><circle cx="682.500" cy="664" r="1.500" fill="#c87010"/><circle cx="962" cy="437" r="1.500" fill="#c02010"/>
            </g>
            <g class="legend">
              <text x="527" y="369.500" textLength="36">contour-1</text><text x="527" y="380" textLength="69">Wall Shear Stress</text>
              <rect x="532.500" y="392" width="17.500" height="199.500" fill="url(#jet)" stroke="#111"/>
              <path d="M550 392h2M550 412h2M550 432h2M550 452h2M550 471.500h2M550 491.500h2M550 511.500h2M550 531.500h2M550 551h2M550 571h2M550 591.500h2" stroke="#111"/>
              <text x="558" y="395" textLength="35">2.12e+06</text><text x="558" y="414.500" textLength="35">1.91e+06</text><text x="558" y="434.500" textLength="35">1.70e+06</text><text x="558" y="454.500" textLength="35">1.49e+06</text><text x="558" y="474" textLength="35">1.28e+06</text><text x="558" y="494" textLength="35">1.07e+06</text><text x="558" y="513.500" textLength="35">8.57e+05</text><text x="558" y="533.500" textLength="35">6.46e+05</text><text x="558" y="553" textLength="35">4.35e+05</text><text x="558" y="573" textLength="35">2.25e+05</text><text x="558" y="593.500" textLength="35">1.38e+04</text>
              <text x="525" y="605.500" textLength="20">[ Pa ]</text>
            </g>
            <g>
              <path d="M1022 672L1028 684" stroke="#1018a0" stroke-width="3"/><path d="M1023 683l7-3-1 7z" fill="#1018a0"/>
              <path d="M1024 662L1031 657" stroke="#108820" stroke-width="3"/><path d="M1028 654l8 1-5 6z" fill="#10a020"/>
              <path d="M1005 666L1014 658L1026 661L1029 672L1019 681L1010 677Z" fill="#8a8a8a" stroke="#333"/><path d="M1005 666L1014 658L1026 661L1015 668Z" fill="#555"/><path d="M1005 666L1015 668L1019 681L1010 677Z" fill="#666"/>
              <circle cx="1019.500" cy="671.500" r="3" fill="#c80c0c"/><circle cx="1012.500" cy="664" r="2.500" fill="#1010c8"/><circle cx="1010.500" cy="674.500" r="2.200" fill="#10b010"/><circle cx="1030.500" cy="668" r="2.300" fill="#10a8b8"/>
              <path d="M1004 660l5 6M1009 660l-4 7" stroke="#d02828"/><path d="M1033 650l2.500 3.500M1038 649l-4 7" stroke="#18c828"/><path d="M1025 686h6l-5 5h6" fill="none" stroke="#2020d8"/>
              <path d="M1043 689Q1048 682 1048 676L1045 677L1050 670L1052 678L1050 677Q1050 684 1045 690ZM1037 696Q1030 700 1024 700L1025 697L1017 702L1026 705L1025 702Q1031 702 1037 697Z" fill="#fff" stroke="#444"/>
            </g>
          </svg>
        </div>
        <div class="tools tools-right">
          <i class="grip"></i>
          <span class="tool"><svg viewBox="0 0 18 18"><ellipse cx="9" cy="5" rx="7" ry="3.800" fill="#c9920e"/><path d="M0 9.500H18" stroke="#555"/><ellipse cx="9" cy="14" rx="7" ry="3.500" fill="#ecd5a0"/></svg></span>
          <span class="tool"><svg viewBox="0 0 18 18"><ellipse cx="12" cy="9" rx="3.500" ry="7" fill="#555" transform="rotate(45 12 9)"/><ellipse cx="6" cy="8.500" rx="4.500" ry="7.500" fill="#c9920e" stroke="#777" stroke-width=".7"/></svg></span>
          <span class="tool"><svg class="t22" viewBox="0 0 22 22"><path d="M0 3l3-3M0 8l8-8M0 13L13 0M0 18L18 0M1 22L22 1M6 22L22 6M11 22L22 11M16 22l6-6M0 18l4 4M0 13l9 9M0 8l14 14M0 3l19 19M3 0l19 19M8 0l14 14M13 0l9 9M18 0l4 4" stroke="#bbb"/><ellipse cx="11" cy="11" rx="4.500" ry="8" fill="#c9920e" stroke="#777" stroke-width=".7"/></svg></span>
          <i class="grip"></i>
          <span class="tool"><svg viewBox="0 0 18 18"><path d="M1 10Q9 2 17 10Q9 17 1 10Z" fill="#fff" stroke="#333" stroke-width="1.300"/><circle cx="9" cy="10" r="2.200" fill="#c9920e"/><path d="M9 1v3M3 3l2 2.500M15 3l-2 2.500" stroke="#333" stroke-width="1.300"/></svg></span>
          <span class="tool"><svg viewBox="0 0 18 18"><path d="M1 10Q9 3 17 10Q9 17 1 10ZM9 1v3M3 3l2 2.500M15 3l-2 2.500" fill="#fff" stroke="#333" stroke-width="1.200"/><circle cx="9" cy="10" r="2.200" fill="#555"/><path d="M4 15L14 4" stroke="#c9920e" stroke-width="2"/></svg></span>
          <span class="tool"><svg viewBox="0 0 18 18"><path d="M3 6V2H17V15H13" fill="none" stroke="#c9920e" stroke-width="1.300" stroke-dasharray="1.500 1.300"/><path d="M2 8Q10 8 11 15" fill="none" stroke="#333" stroke-width="1.600"/><path d="M0 8l4-2v4z" fill="#333"/></svg></span>
          <i class="grip"></i>
          <span class="tool"><svg viewBox="0 0 18 18"><path d="M3 3V15H15M3 15L11 8" fill="none" stroke="#222" stroke-width="1.400"/><path d="M3 1l2 3H1zM17 15l-3-2v4zM13 6l-3.500.5 2.500 3z" fill="#c9920e"/></svg></span>
          <span class="tool"><svg viewBox="0 0 18 18"><rect x="0" y="7" width="18" height="4.500" rx="2.200" fill="#fff" stroke="#888"/><rect x=".5" y="7" width="9.500" height="4.500" fill="#c9920e"/></svg></span>
          <span class="tool"><svg viewBox="0 0 18 18"><path d="M2 2H13L16 5V16H2Z" fill="#fff" stroke="#222" stroke-width="1.500"/><path d="M5 6.500h7" stroke="#c9920e" stroke-width="1.500"/><path d="M5 10h6M5 13h6" stroke="#222" stroke-width="1.300"/></svg></span>
          <span class="tool"><svg viewBox="0 0 18 18"><rect x="2" y="4" width="4" height="10" fill="#888"/><path d="M6 4h3v8l-3 2z" fill="#f4e0b4" stroke="#c9a040" stroke-width=".7"/><path d="M11 7h6M11 11h6M13 5l-2 2 2 2M13 9l-2 2 2 2" fill="none" stroke="#888"/></svg></span>
          <i class="grip"></i>
          <span class="tool"><svg viewBox="0 0 18 18"><path d="M3 14V2.500H13" fill="none" stroke="#111" stroke-width="2.500"/><rect x="6" y="5" width="9" height="11" fill="#fff" stroke="#c9920e" stroke-width="1.300"/></svg></span>
          <span class="tool"><svg viewBox="0 0 18 18"><path d="M1.500 4H5L6.500 2.500H11.500L13 4H16.500V15H1.500Z" fill="#fff" stroke="#c9920e" stroke-width="1.300"/><circle cx="9" cy="9" r="3" fill="#111"/></svg></span>
        </div>
      </div>
      <div class="select-row"><i class="vgrip"></i><span>0 selected</span><span class="combo combo-all">all<i class="caret"></i></span></div>
      <div class="console">
        <div class="panel-head">Console<svg width="22" height="12"><rect x="1.500" y="2.500" width="7" height="7.500" fill="none" stroke="#666"/><rect x="3.500" y="4.500" width="3" height="3" fill="none" stroke="#666"/><path d="M19 2.500L15.500 5.500L19 8.500" fill="none" stroke="#333" stroke-width="1.500"/></svg></div>
        <div class="console-body">
<pre>     y-velocity
     z-velocity
     hyb_init-0
     hyb_init-1
Done.

Calculation complete.
Contour object is not valid to display, saving object.</pre>
          <span class="warn"><svg viewBox="0 0 22 20"><path d="M11 4L16.500 15H5.500Z" fill="none" stroke="#dcc47c" stroke-width="1.300"/><path d="M11 8v4M11 13v1.300" stroke="#666"/></svg></span>
          <span class="stop"><svg viewBox="0 0 22 20"><ellipse cx="10.500" cy="9.500" rx="5.500" ry="5.800" fill="none" stroke="#8c1010" stroke-width="1.300"/></svg></span>
          <div class="cscroll"><svg class="sbtn" width="13" height="17"><path d="M3 10h6l-3-4z" fill="#5c6c75"/></svg><span class="track"></span><span class="thumb"></span><svg class="sbtn" width="13" height="17"><path d="M3 6h6l-3 4z" fill="#5c6c75"/></svg><svg class="ck" width="13" height="13"><path d="M3 6l2.500 4 4-8" fill="none" stroke="#111" stroke-width="1.800"/></svg></div>
        </div>
      </div>
    </section>
  </main>
</div>
<div class="edge"></div>
</div>
<footer class="taskbar"><span class="task-chip"></span><span class="clock">8:08 AM</span></footer>

<section class="dialog">
  <header class="dlg-head"><svg><use href="#logo"/></svg><span>Contours</span><svg class="dlg-x" viewBox="0 0 27 25"><path d="M9.500 8.500l8 8M17.500 8.500l-8 8" stroke="#fbdfe2"/></svg></header>
  <div class="dlg-body">
    <label class="lbl">Contour Name</label>
    <div class="input input-name">contour-1</div>
    <div class="dlg-cols">
      <div class="dlg-left">
        <b class="lbl">Options</b>
        <div class="box opts">
          <p><i class="cb on"></i>Filled</p><p><i class="cb on"></i>Node Values</p><p><i class="cb on"></i>Contour Lines</p><p><i class="cb on"></i>Global Range</p><p><i class="cb"></i>Auto Range</p><p><i class="cb on"></i>Clip to Range</p><p class="dim"><i class="cb off"></i>Draw Profiles</p><p><i class="cb"></i>Draw Mesh</p>
        </div>
        <b class="lbl lbl-color">Coloring</b>
        <div class="box coloring"><p><i class="rb"></i>Banded</p><p><i class="rb on"></i>Smooth</p></div>
        <span class="btn btn-cmap">Colormap Options...</span>
      </div>
      <div class="dlg-right">
        <label class="lbl">Contours of</label>
        <div class="combo c1">Wall Fluxes...<i class="caret"></i></div>
        <div class="combo c2">Wall Shear Stress<i class="caret"></i></div>
        <div class="minmax"><div><label class="lbl">Min [Pa]</label><div class="input">13792.88</div></div><div><label class="lbl">Max [Pa]</label><div class="input">2121390</div></div></div>
        <div class="surf">
          <label>Surfaces</label><div class="input ph">Filter Text</div>
          <span class="sq"><svg viewBox="0 0 18 18"><path d="M1 3h10M1 6.500h10M1 10h6" stroke="#111" stroke-width="1.500"/><circle cx="12.500" cy="12.500" r="3.500" fill="none" stroke="#c9920e" stroke-width="1.800"/></svg></span>
          <span class="sq"><svg viewBox="0 0 18 18"><path d="M1 3h13M1 6.500h13M1 10h9" stroke="#111" stroke-width="1.500"/><path d="M12 14h5l-2.500 3z" fill="#99a"/></svg></span>
          <span class="sq"><svg viewBox="0 0 18 18"><path d="M1 3h10M1 6.500h10M1 10h5" stroke="#111" stroke-width="1.500"/><path d="M7 12l3 4 7-8" fill="none" stroke="#c9920e" stroke-width="1.800"/></svg></span>
          <span class="sq"><svg viewBox="0 0 18 18"><path d="M1 3h9M1 6.500h9M1 10h5" stroke="#111" stroke-width="1.500"/><path d="M10 10l6 6M16 10l-6 6" stroke="#c9920e" stroke-width="1.800"/></svg></span>
        </div>
        <ul class="list"><li>inlet</li><li>outlets</li><li>porus_zone</li><li>wall-stentinserteddomain_solid</li><li>walls</li></ul>
        <b class="lbl">Display State</b>
        <div class="box state"><div class="combo">None<i class="caret"></i></div><span class="btn">Use Active</span><span class="btn btn-ns">New Surface<i class="caret"></i></span></div>
      </div>
    </div>
    <div class="dlg-foot"><span class="btn primary">Save/Display</span><span class="btn b-comp">Compute</span><span class="btn b-close">Close</span><span class="btn b-help">Help</span></div>
  </div>
  <svg class="grab" width="11" height="11"><path d="M0 11L11 0M4 11L11 4M8 11L11 8" stroke="#888"/></svg>
</section>
<script src="script.js"></script>
</body>
</html>
```

FILE: styles.css
```css
* { box-sizing: border-box; }
body { margin: 0; width: 1106px; height: 904px; overflow: hidden; background: #000; color: #24262b; font: 11px/14px "DejaVu Sans Condensed", "DejaVu Sans", sans-serif; font-stretch: condensed; position: relative; }
p, h3, ul, pre { margin: 0; padding: 0; }
i { font-style: normal; }
svg { display: block; flex: none; }
.defs { position: absolute; }

.banner { height: 50px; background: #ff4238; color: #fff; display: flex; align-items: center; justify-content: center; padding: 2px 10px 0 0; font: bold 16px/22px "Noto Sans", sans-serif; font-stretch: normal; white-space: nowrap; }
.banner span { letter-spacing: .04px; }
.banner a { text-decoration: underline; }

.desktop { display: flex; height: 847px; }
.app { width: 1101px; display: flex; flex-direction: column; background: #fefefe; }
.edge { width: 5px; background: #838383; border-left: 1px solid #2a2a2a; }

.titlebar { height: 20px; display: flex; align-items: center; background: #fff; white-space: nowrap; }
.title-logo { width: 14px; height: 14px; }
.title-text { margin-left: 4px; width: 690px; font: 10.800px/16px "Open Sans", sans-serif; font-stretch: normal; letter-spacing: -.385px; color: #111; }
.win-icons { margin-left: 286px; }
.win-close { width: 38px; height: 18px; margin: 0 0 2px 6px; background: #e81123; }

.quickbar { height: 33px; display: flex; align-items: center; gap: 8.500px; padding-left: 4px; background: linear-gradient(#fdfdfd, #efefee); border-bottom: 1px solid #a9adb0; }
.quickbar > svg { width: 20px; height: 20px; }
.wb { width: 21px; height: 21px; background: #000; color: #fff; overflow: hidden; margin: 0 -.5px; }
.wb svg { width: 21px; height: 13px; }
.wb b { display: block; font-size: 9px; line-height: 9px; text-align: center; }

.tabs { height: 26px; display: flex; background: #30495f; color: #c9d4df; font-weight: bold; }
.tab { width: 103.300px; text-align: center; line-height: 29px; flex: none; }
.tab-file { width: 62px; margin-right: 2px; }
.tab-active { background: #fbfbf9; color: #3f5369; line-height: 28px; }
.tab-last { width: 80px; padding-left: 22px; }
.tab-scroll { width: 27px; background: #fbfbf9; }
.tab-up { width: 31px; }
.search { width: 120px; background: #15222c; border-radius: 4px; display: flex; align-items: center; gap: 1px; color: #8d979f; font-weight: normal; font-size: 11px; padding-top: 2px; }
.ansys { width: 58px; background: #000; color: #fff; display: flex; align-items: center; padding: 2px 0 0 7px; }
.ansys b { font: bold 14px/20px "Open Sans", sans-serif; margin-left: -1px; }

.ribbon { height: 99px; background: #fbfbf9; display: flex; padding: 4px 0 6px 2px; }
.group { border-right: 1px solid #6b6e7a; height: 89px; flex: none; }
.group h3 { font-size: 11px; line-height: 14px; text-align: center; margin: 4px 0 2px; color: #30363f; }
.g-mesh { width: 323px; border-left: 1px solid #6b6e7a; }
.g-zones { width: 310px; }
.g-int { width: 91px; }
.g-models { width: 123px; }
.cols { display: grid; }
.g-mesh .cols { grid-template-columns: 67px 60px 64px 110px; padding-left: 11px; }
.g-mesh .col:first-child .caret { margin-right: 0; }
.g-zones .cols { grid-template-columns: 93px 96px 102px; padding-left: 11px; }
.g-int .cols { padding-left: 10px; }
.g-models .cols { padding-left: 11px; }
.col p { height: 24px; display: flex; align-items: center; gap: 4px; white-space: nowrap; padding-top: 1px; }
.col svg { width: 16px; height: 16px; overflow: visible; margin-top: -1px; }
.col svg.i18 { width: 18px; height: 18px; margin-right: -1px; }
.caret { width: 0; height: 0; border: 3.500px solid transparent; border-top: 4px solid #697077; border-bottom: 0; flex: none; }
.col .caret { margin: 7px 1px 0 auto; }
.g-zones .col-combine .caret { margin-right: 11px; }
.g-mesh .col:last-child { margin-left: 11px; }
.g-mesh .col:last-child .caret { margin-right: -1px; }
.big { display: flex; flex-direction: column; align-items: center; padding: 10px 0 0 0; }
.big svg { width: 34px; height: 34px; }
.big-q svg { margin-left: 0; }
.big > span { margin-top: 4px; display: flex; align-items: center; padding-left: 6px; }
.big-q > span { padding-left: 13px; }
.big .caret { margin-top: 4px; }
.big .caret-far { margin-left: 6px; }
.dim { color: #8b8d92; }
.solo { display: flex; flex-direction: column; align-items: center; justify-content: center; position: relative; line-height: 13.500px; padding: 5px 11px 0 0; }
.solo .caret { position: absolute; right: 8px; bottom: 3px; }
.g-turbo { width: 61px; } .g-adapt { width: 60px; } .g-surface { width: 71px; }

.workspace { flex: 1; display: grid; grid-template-columns: 227px 3px 248px 2px 621px; min-height: 0; }
.workspace > * { grid-row: 1; min-height: 0; }
.outline { grid-column: 1; background: #ebeff1; display: flex; flex-direction: column; }
.task { grid-column: 3; background: #f6f6f6; border-right: 1px solid #a5abb0; border-left: 1px solid #c9c9c9; display: flex; flex-direction: column; }
.right { grid-column: 5; display: flex; flex-direction: column; }
.panel-head { height: 24px; background: #bfc7cb; color: #5b6f86; font-weight: bold; font-size: 11px; display: flex; align-items: center; justify-content: space-between; padding: 1px 3px 0 6px; flex: none; }
.outline .panel-head { background: #ebeff1; }
.outline-body { flex: 1; display: flex; min-height: 0; }
.tree { width: 210px; height: 633px; overflow: hidden; white-space: nowrap; }
.tree-filter { margin: 10px 0 0 4px; height: 26px; line-height: 25px; width: 200px; border-radius: 13px; background: #f8faf9; padding-left: 14px; color: #85898d; }
.row { height: 16.350px; display: flex; align-items: center; font-size: 10.800px; padding-top: 1px; }
.row.bold { padding-top: 0; margin-top: -.5px; }
.row.last { margin-top: -2.500px; }
.row svg { width: 13px; height: 13px; margin: 0 6px 0 5px; }
.row .narrow { width: 11px; height: 11px; margin: 0 5px 0 5px; }
.row b { color: #16181c; margin-left: 5px; font-size: 11px; }
.knob { width: 12px; height: 12px; border: 1px solid #a9b2ba; border-radius: 50%; font: bold 9px/10px "DejaVu Sans", sans-serif; text-align: center; color: #444c5e; flex: none; margin-top: -1px; }
.top { padding-left: 5px; }
.lv1 { padding-left: 22px; } .lv1 .leaf { margin-left: 17px; }
.lv2 { padding-left: 39px; } .lv2 .leaf { margin-left: 18px; }
.lv3 { padding-left: 56px; } .lv3 .leaf { margin-left: 18px; }
.hid-1 { margin-top: 104px; padding-left: 22px; }
.hid-2 { margin-top: 15px; }
.hid-3 { margin-top: 47px; padding-left: 22px; }
.hid-4 { margin-top: 115px; padding-left: 22px; }
.hid-5 { margin-top: 15px; }
.vscroll { width: 13px; height: 633px; display: flex; flex-direction: column; padding-top: 4px; }
.vscroll .thumb { flex: 1; }
.vscroll .track { height: 11px; }
.thumb { background: #595f70; } .track { background: #c3cbd5; } .sbtn { background: #9cadb4; }
.hscroll { height: 12px; display: flex; flex: none; }
.hs-outline { padding-left: 2px; }
.hs-outline .thumb { width: 118px; } .hs-outline .track { width: 56px; }
.hs-task .thumb { width: 180px; } .hs-task .track { flex: 1; }
.task-body { flex: 1; display: flex; justify-content: flex-end; }
.peek { width: 6px; display: flex; flex-direction: column; padding-top: 45px; background: #fbfbfb; height: 420px; gap: 20px; }
.peek i { border-top: 1px solid #c4c9da; height: 15px; }
.peek .mo { background: #d4d4d4; height: 24px; margin-top: -30px; }

.view-row { display: flex; height: 489px; }
.viewer { width: 547px; }
.tools { display: flex; flex-direction: column; align-items: center; gap: 4.200px; padding-top: 2px; }
.tools-left { width: 39px; padding-right: 3px; }
.tools-right { width: 35px; }
.grip { width: 14px; height: 4px; margin: 3px 0 3.400px 3px; background: radial-gradient(circle at 1px 1px, #ccc .6px, transparent 1px) 0 0 / 3px 3px; }
.grip:first-child { margin: 2px 0 1px 3px; }
.tool { width: 25px; height: 25px; border: 1px solid #8b9ba7; border-radius: 4px; display: grid; place-items: center; background: #fff; flex: none; }
.tool svg { width: 16px; height: 16px; overflow: visible; }
.tool svg.t20 { width: 20px; height: 20px; }
.tool svg.t22 { width: 22px; height: 22px; }
.tool-on { width: 28px; height: 28px; border: 2px solid #8f9fac; margin: 0 -2px 0 1px; }
.view-tabs { display: flex; height: 24px; }
.vtab { width: 274px; background: #fff; display: flex; align-items: center; padding: 0 9px 0 4px; color: #222932; }
.vtab b { flex: 1; text-align: center; font-size: 11px; white-space: nowrap; padding: 1px 0 0 5px; }
.vtab-on { width: 273px; background: #cdd4e4; }
.vtab-on b { letter-spacing: .07px; }
.vt-logo { width: 14px; height: 14px; margin-bottom: 3px; }
.vt-x { width: 9px; height: 9px; margin-left: 6px; }
.legend text { font: 7.500px "Liberation Sans", sans-serif; fill: #111; }

.select-row { height: 31px; display: flex; align-items: center; justify-content: flex-end; padding-right: 4px; background: #fff; font-size: 10.800px; }
.vgrip { width: 4px; height: 14px; margin: 0 auto 0 5px; background: radial-gradient(circle at 1px 1px, #ccc .6px, transparent 1px) 0 0 / 3px 3px; }
.combo { height: 20px; border: 1px solid #c9cde0; border-radius: 4px; background: #fff; display: flex; align-items: center; justify-content: space-between; padding: 1px 6px 0 5px; }
.combo .caret { border-width: 4.500px 4px 0; margin-bottom: 3px; }
.combo-all { width: 120px; margin-left: 3px; padding-left: 4px; }
.console { flex: 1; background: #bfc7cb; display: flex; flex-direction: column; }
.console .panel-head { height: 23px; padding: 0 1px 0 8px; }
.console-body { height: 122px; background: #f7f7f5; border: 1px solid #c9cde0; border-top: 0; border-radius: 4px; display: flex; overflow: hidden; }
pre { flex: 1; margin: -2.500px 0 0 4px; font: 11.450px/13.800px "Liberation Mono", monospace; color: #111; }
.warn, .stop { width: 24px; height: 20px; border: 1px solid #ccc; border-radius: 3px; margin-right: 5px; background: #fafafa; }
.stop { margin: 0; border-radius: 0; background: linear-gradient(#f01c1c, #e86868); border: 2px solid #200; border-width: 1px 0 0 1px; }
.cscroll { width: 13px; display: flex; flex-direction: column; }
.cscroll .track { flex: 1; } .cscroll .thumb { height: 17px; }
.cscroll .ck { background: #fff; }

.taskbar { height: 7px; background: #000; display: flex; overflow: hidden; }
.task-chip { width: 42px; margin-left: 293px; background: #2b2b2b; }
.clock { margin: 3px 0 0 674px; color: #ddd; font: 10px/12px "Open Sans", sans-serif; }

.dialog { position: absolute; left: 27px; top: 253px; width: 445px; height: 418px; background: #fefefe; border: 1px solid #8f9294; }
.dlg-head { height: 25px; display: flex; align-items: center; color: #999; padding-left: 6px; }
.dlg-head svg { width: 14px; height: 14px; }
.dlg-head span { flex: 1; margin-left: 5px; }
.dlg-head .dlg-x { width: 27px; height: 25px; background: #f7a0aa; }
.dlg-body { padding: 5px 4px 0 3px; font-size: 10.800px; }
.lbl { display: block; height: 14px; line-height: 14px; white-space: nowrap; }
b.lbl { color: #3b424e; font-size: 11px; }
.input { height: 18px; line-height: 17px; border: 1px solid #c9cde0; border-radius: 4px; padding-left: 2px; background: #fff; }
.input-name { margin-top: 1px; }
.dlg-cols { display: grid; grid-template-columns: 116px 315px; column-gap: 5px; margin-top: 5px; }
.box { border: 1px solid #dcdfec; }
.opts { height: 153px; margin-top: 1px; padding: 2px 0 0 6px; }
.box p { height: 18.150px; display: flex; align-items: center; gap: 5px; }
.cb, .rb { width: 13px; height: 13px; border: 1px solid #c6c8cc; background: #fff; flex: none; position: relative; margin-top: -2px; }
.cb.off { background: #f1f1f1; }
.cb.on::after { content: ""; position: absolute; left: 3.500px; top: 0; width: 3px; height: 7px; border: solid #222; border-width: 0 2px 2px 0; transform: rotate(38deg); }
.rb { border-radius: 50%; border-color: #aaadb2; }
.rb.on::after { content: ""; position: absolute; left: 3px; top: 3px; width: 5px; height: 5px; border-radius: 50%; background: #333; }
.lbl-color { margin-top: 20px; }
.coloring { width: 71px; height: 45px; padding: 3px 0 0 6px; }
.btn { height: 24px; border: 1px solid #5c6478; border-radius: 4px; color: #4c5668; font-weight: bold; font-size: 11px; background: #fff; display: flex; align-items: center; justify-content: center; white-space: nowrap; padding-top: 2px; }
.btn-cmap { width: 115px; margin-top: 8px; font-size: 10.800px; }
.c1 { margin-top: 1px; } .c2 { margin-top: 6px; padding-left: 6px; }
.minmax { display: grid; grid-template-columns: 104px 105px; gap: 2px; margin-top: 4px; }
.minmax .input { margin-top: 2px; }
.surf { display: flex; align-items: center; margin-top: 5px; height: 26px; }
.surf label { width: 48px; padding-top: 2px; }
.surf .ph { width: 144px; color: #8e9095; margin-right: 5px; }
.sq { width: 25px; height: 25px; margin-right: 6px; border: 1px solid #5c6478; border-radius: 4px; display: grid; place-items: center; }
.sq:last-child { margin-right: 0; }
.sq svg { width: 18px; height: 18px; }
.list { list-style: none; height: 112px; margin: 2px 0 4px; border: 1px solid #d2d5dc; border-radius: 2px; padding-top: 1px; }
.list li { height: 14.650px; line-height: 18px; background: #8ba2b6; padding-left: 3px; margin: 0 1px; color: #1e2228; }
.state { height: 33px; display: flex; align-items: center; padding: 0 3px; gap: 5px; }
.state .combo { width: 143px; }
.state .btn { width: 66px; }
.state .btn-ns { width: 88px; gap: 4px; }
.btn-ns .caret { margin: 7px -4px 0 0; border-width: 3px 2.500px 0; }
.dlg-foot { margin-top: 4px; border-top: 1px solid #9a9ca0; padding: 11px 0 0 98px; display: flex; gap: 7px; }
.dlg-foot .btn { width: 60px; }
.dlg-foot .primary { width: 85px; background: #565f73; color: #fff; }
.dlg-foot .b-close { width: 40px; } .dlg-foot .b-help { width: 35px; }
.grab { position: absolute; right: 0; bottom: 0; }
```

FILE: script.js
```js
// Iso-lines for the result surface, traced from a small synthetic scalar field.
let seed = 7;
const rnd = () => (seed = (seed * 16807) % 2147483647) / 2147483647;
const lattice = Array.from({ length: 4096 }, rnd);
const at = (i, j) => lattice[((j & 63) << 6) | (i & 63)];
const ease = t => t * t * (3 - 2 * t);
function noise(x, y) {
  const i = Math.floor(x), j = Math.floor(y), u = ease(x - i), v = ease(y - j);
  return (at(i, j) * (1 - u) + at(i + 1, j) * u) * (1 - v) + (at(i, j + 1) * (1 - u) + at(i + 1, j + 1) * u) * v;
}
const bumps = [[757, 530, 20, 50, 1], [842, 490, 16, 45, .8], [890, 450, 24, 34, -.9], [712, 560, 14, 32, -.8],
  [735, 608, 38, 15, -.7], [808, 545, 12, 42, -.6], [750, 450, 24, 20, .6], [830, 592, 28, 18, .8], [880, 550, 22, 22, .4]];
function field(x, y) {
  let f = noise(x / 24, y / 30) * .9 + noise(x / 9 + 20, y / 10) * .28;
  for (const [cx, cy, rx, ry, a] of bumps) f += a * Math.exp(-(((x - cx) / rx) ** 2) - ((y - cy) / ry) ** 2);
  return f;
}
function trace(x0, y0, x1, y1, s, levels) {
  let d = '';
  for (let y = y0; y < y1; y += s) for (let x = x0; x < x1; x += s) {
    const c = [[x, y], [x + s, y], [x + s, y + s], [x, y + s]], v = c.map(p => field(p[0], p[1]));
    for (const l of levels) {
      const pts = [];
      for (let k = 0; k < 4; k++) {
        const m = (k + 1) % 4;
        if ((v[k] < l) !== (v[m] < l)) {
          const t = (l - v[k]) / (v[m] - v[k]);
          pts.push((c[k][0] + t * (c[m][0] - c[k][0])).toFixed(1) + ' ' + (c[k][1] + t * (c[m][1] - c[k][1])).toFixed(1));
        }
      }
      for (let k = 0; k + 1 < pts.length; k += 2) d += 'M' + pts[k] + 'L' + pts[k + 1];
    }
  }
  return d;
}
document.getElementById('lines').setAttribute('d', trace(660, 395, 945, 645, 2.5, [-.5, -.2, .05, .25, .4, .55, .7, .85, 1.05, 1.3, 1.6]));
document.getElementById('ghost-lines').setAttribute('d', trace(690, 450, 995, 718, 3, [.2, .4, .55, .7, .9]));

// Fine speckle in the coarse-gradient zone between the rim and the core.
let specks = '';
for (let n = 0; n < 5200; n++) {
  const x = 655 + rnd() * 305, y = 375 + rnd() * 285;
  const u = (x - 803) * .8 + (y - 512) * -.6, w = (x - 803) * .6 + (y - 512) * .8;
  const r = Math.hypot(u / 165, w / 118);
  if (r < .72 || r > 1.02 || rnd() > (r - .66) * 2.4) continue;
  specks += `M${x.toFixed(1)} ${y.toFixed(1)}l${(rnd() * 3 - 1.5).toFixed(1)} ${(rnd() * 3 - 1.5).toFixed(1)}`;
}
document.getElementById('specks').setAttribute('d', specks);

let faint = '';
for (let n = 0; n < 1100; n++) {
  const t = rnd(), off = rnd() * rnd() * 45;
  const x = 715 + t * 250 + off * .5, y = 672 - t * 90 - t * t * t * 100 + off * .8;
  faint += `M${x.toFixed(1)} ${y.toFixed(1)}l${(rnd() * 3 - 1.5).toFixed(1)} ${(rnd() * 3 - 1.5).toFixed(1)}`;
}
document.getElementById('ghost-specks').setAttribute('d', faint);
```
